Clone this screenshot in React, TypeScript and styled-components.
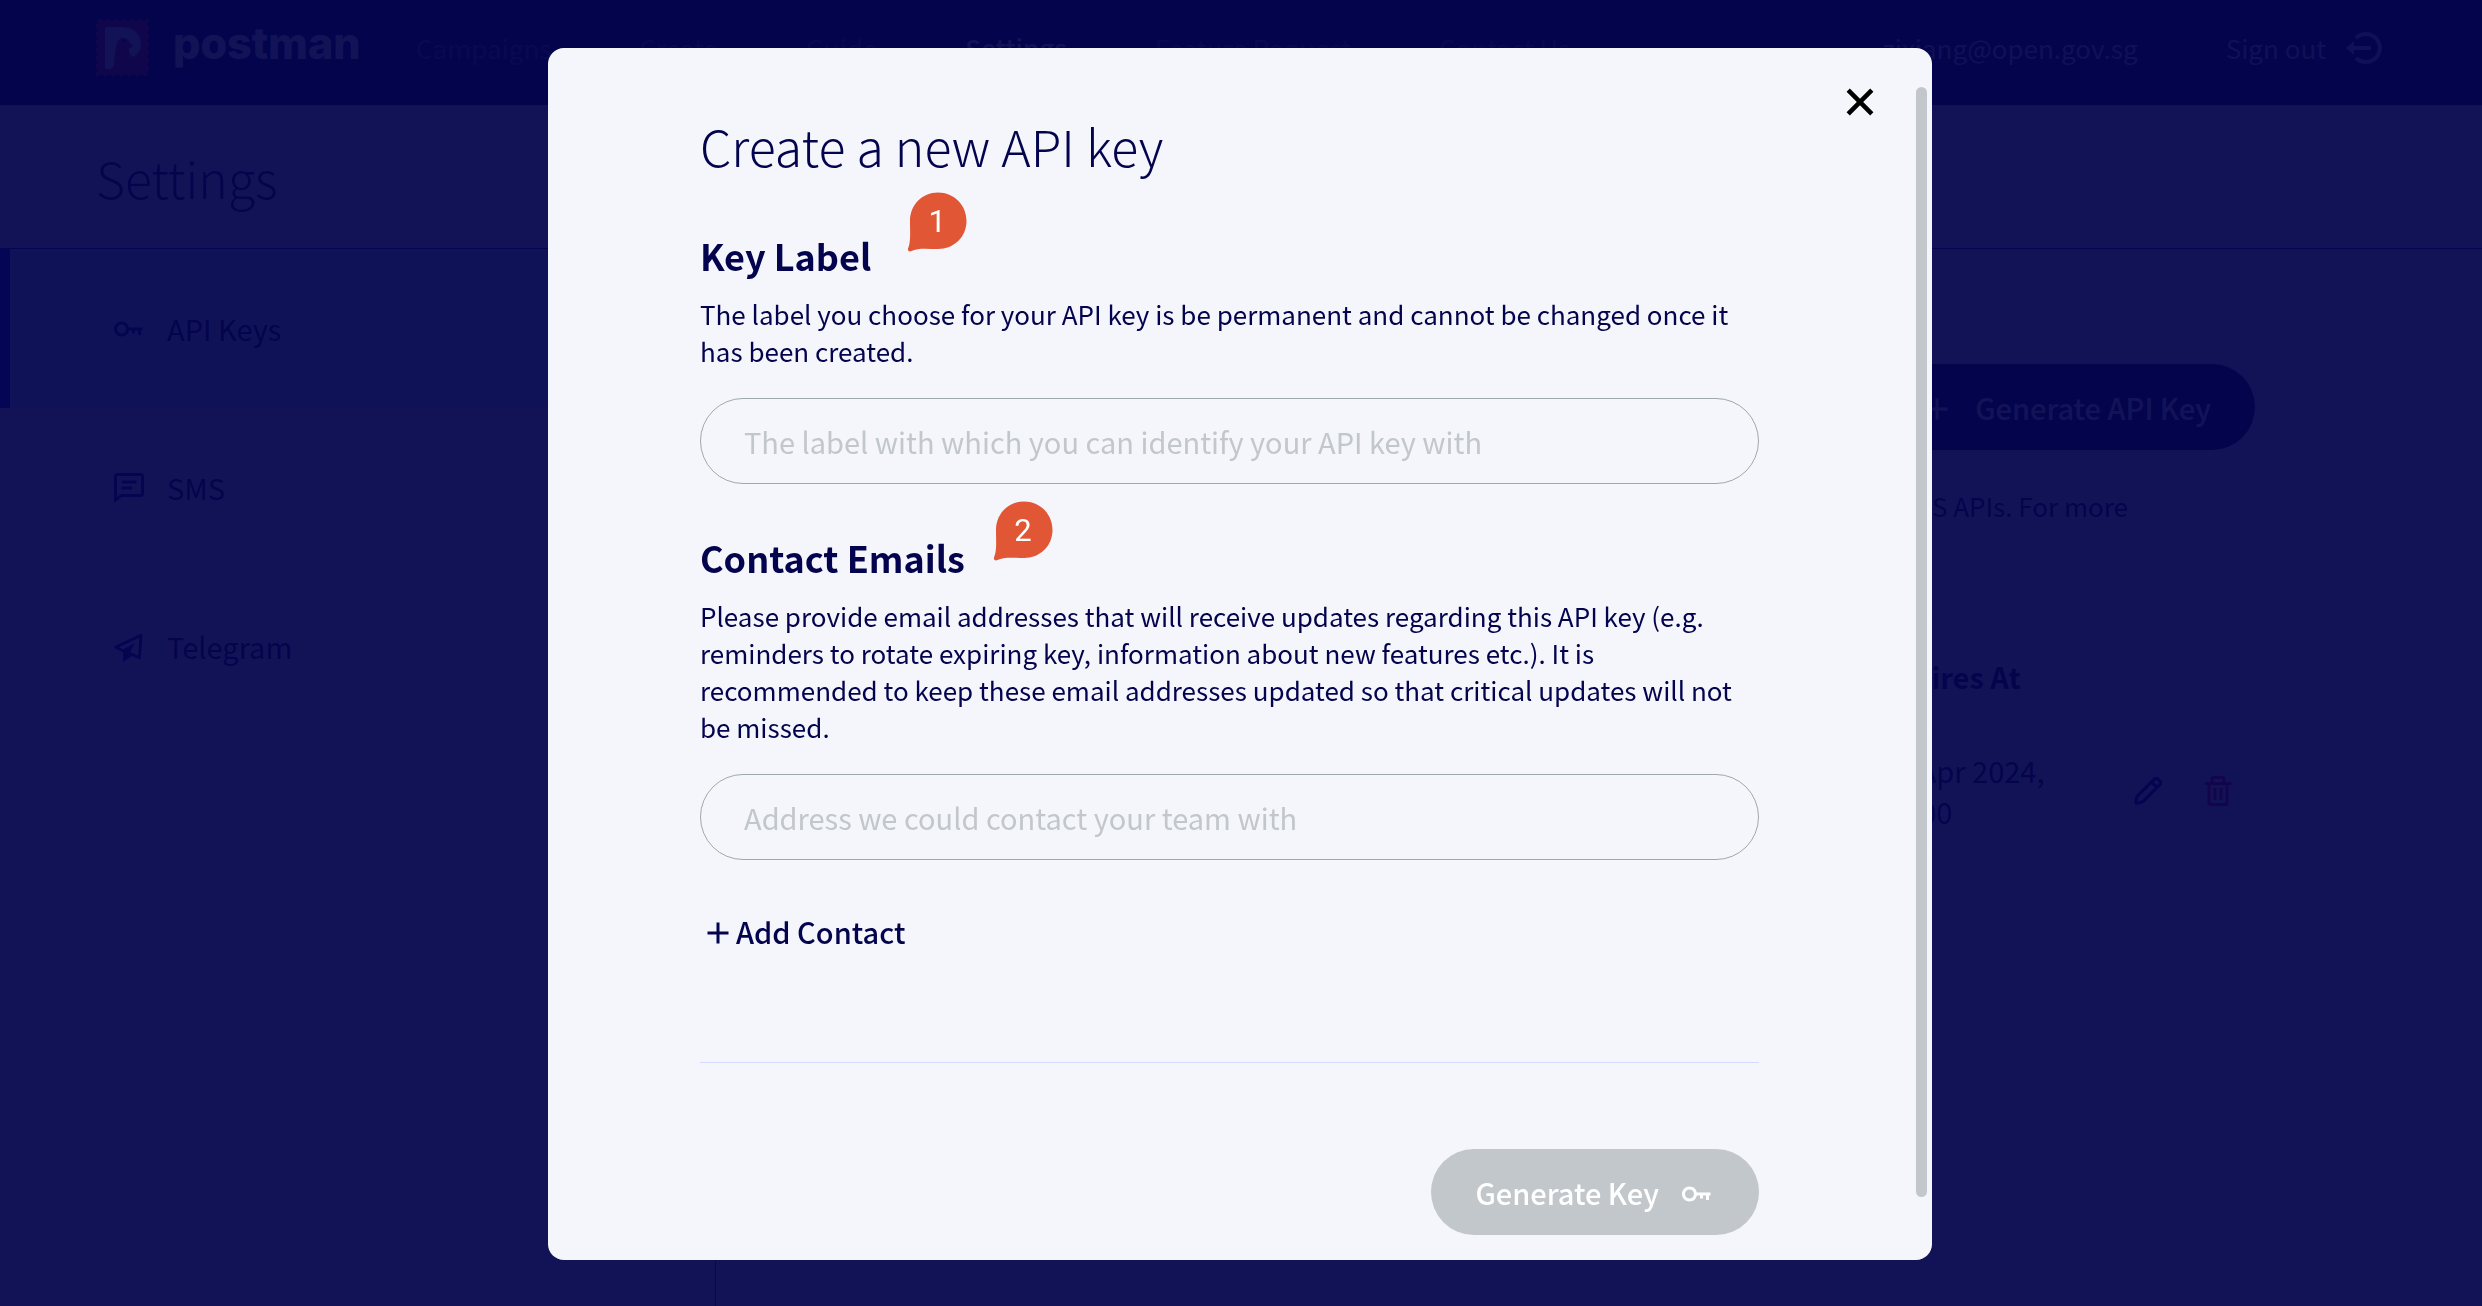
import React from 'react';
import styled, { createGlobalStyle } from 'styled-components';
import { BiCommentDetail, BiPaperPlane, BiPlus, BiTrash } from 'react-icons/bi';

const navy = '#03044d';
const paper = '#f5f6fc';
const grey = '#c2c7cb';

const Global = createGlobalStyle`
  *, *::before, *::after { box-sizing: border-box; }
  body {
    margin: 0;
    background: ${paper};
    color: ${navy};
    font-family: "Noto Sans CJK SC", sans-serif;
    font-size: 29px;
    line-height: 41px;
  }
  h1, h2, p { margin: 0; }
  button, input { font: inherit; }
  svg { display: block; flex: none; }
`;

/* ---------- page behind the dialog ---------- */

const Page = styled.div`
  display: flex;
  flex-direction: column;
  height: 100vh;
  overflow: hidden;
`;

const Header = styled.header`
  display: flex;
  align-items: center;
  flex: none;
  height: 105px;
  padding: 0 96px 10px;
  background: ${navy};
  color: ${paper};
  font-size: 26px;
`;

const Brand = styled.a`
  display: flex;
  align-items: center;
  gap: 24px;
  width: 320px;
  color: inherit;
  text-decoration: none;
`;

const Wordmark = styled.span`
  padding-bottom: 8px;
  font-family: Inter, sans-serif;
  font-size: 43px;
  font-weight: 800;
`;

const Nav = styled.nav`
  display: flex;
  flex: 1;
  gap: 88px;
  white-space: nowrap;
`;

const NavLink = styled.a<{ $active?: boolean }>`
  color: inherit;
  text-decoration: none;
  opacity: ${p => (p.$active ? 1 : 0.35)};
  font-weight: ${p => (p.$active ? 500 : 400)};
`;

const Account = styled.div`
  display: flex;
  align-items: center;
  gap: 88px;
  opacity: 0.8;
`;

const SignOut = styled.button`
  display: flex;
  align-items: center;
  gap: 20px;
  padding: 0;
  border: 0;
  background: none;
  color: inherit;
`;

const TitleBar = styled.div`
  display: flex;
  align-items: center;
  flex: none;
  height: 144px;
  padding: 0 96px;
  border-bottom: 1px solid #0c0ca0;
`;

const Title = styled.h1`
  font-size: 50px;
  font-weight: 300;
  line-height: 60px;
`;

const Columns = styled.div`
  display: flex;
  flex: 1;
`;

const Sidebar = styled.nav`
  width: 716px;
  border-right: 1px solid #4a4ac8;
`;

const SideLink = styled.a<{ $active?: boolean }>`
  display: flex;
  align-items: center;
  gap: 20px;
  height: 159px;
  padding-left: 101px;
  border-left: 10px solid ${p => (p.$active ? '#1515c8' : 'transparent')};
  background: ${p => (p.$active ? '#d9e2fb' : 'transparent')};
  color: inherit;
  text-decoration: none;
  svg { color: #14148c; }
`;

const Main = styled.main`
  flex: 1;
  padding: 115px 227px 0 96px;
`;

const MainHead = styled.div`
  display: flex;
  align-items: center;
  justify-content: flex-end;
`;

const Pill = styled.button<{ $bg: string }>`
  display: flex;
  align-items: center;
  gap: 20px;
  height: 86px;
  padding: 0 44px;
  border: 0;
  border-radius: 43px;
  background: ${p => p.$bg};
  color: #fff;
  font-weight: 500;
  svg { margin-top: 4px; }
`;

const Intro = styled.p`
  width: fit-content;
  margin: 37px 127px 57px auto;
  font-size: 26px;
  line-height: 37px;
`;

const Table = styled.table`
  width: 100%;
  border-collapse: collapse;
  table-layout: fixed;
  text-align: left;
  th, td { height: 115px; padding: 0; border-top: 1px solid #d4ddfb; }
  tbody tr { border-bottom: 1px solid #d4ddfb; }
  th:nth-child(2) { width: 250px; }
  th:nth-child(3) { width: 125px; }
`;

const Actions = styled.div`
  display: flex;
  gap: 34px;
`;

const IconButton = styled.button<{ $color: string }>`
  display: block;
  padding: 0;
  border: 0;
  background: none;
  color: ${p => p.$color};
`;

/* ---------- dialog ---------- */

const Overlay = styled.div`
  position: fixed;
  inset: 0;
  display: flex;
  justify-content: center;
  padding: 48px 2px 46px 0;
  background: rgba(3, 4, 77, 0.94);
`;

const Dialog = styled.section`
  position: relative;
  display: flex;
  width: 100%;
  max-width: 1384px;
  border-radius: 16px;
  background: ${paper};
  overflow: hidden;
`;

const Form = styled.form`
  flex: 1;
  display: flex;
  flex-direction: column;
  padding: 67px 157px 0 152px;
`;

const ScrollTrack = styled.div`
  display: flex;
  width: 16px;
  padding: 39px 5px 63px 0;
`;

const ScrollThumb = styled.div`
  flex: 1;
  border-radius: 6px;
  background: ${grey};
`;

const Close = styled.button`
  position: absolute;
  top: 36px;
  right: 54px;
  padding: 0;
  border: 0;
  background: none;
  color: #000;
`;

const Field = styled.div<{ $gap: number }>`
  margin-top: ${p => p.$gap}px;
`;

const Label = styled.label`
  position: relative;
  display: block;
  width: fit-content;
  font-size: 36px;
  font-weight: 700;
  line-height: 48px;
`;

const Help = styled.p`
  margin: 16px 0 29px;
  font-size: 26px;
  line-height: 37px;
`;

const Input = styled.input`
  display: block;
  width: 100%;
  height: 86px;
  padding: 0 43px;
  border: 1px solid #9fa8ad;
  border-radius: 43px;
  background: transparent;
  color: ${navy};
  &::placeholder { color: ${grey}; opacity: 1; }
`;

const AddContact = styled.button`
  display: flex;
  align-items: center;
  align-self: flex-start;
  height: 86px;
  margin-top: 28px;
  padding: 0;
  border: 0;
  background: none;
  color: ${navy};
  font-weight: 500;
  svg { margin-top: 4px; }
`;

const Footer = styled.footer`
  display: flex;
  justify-content: flex-end;
  margin-top: 88px;
  padding-top: 86px;
  border-top: 1px solid #d4ddfb;
`;

const Marker = styled.span<{ $right: number; $up: number }>`
  position: absolute;
  left: calc(100% + ${p => p.$right}px);
  bottom: ${p => p.$up}px;
  display: grid;
  width: 60px;
  height: 60px;
  > * { grid-area: 1 / 1; }
`;

const MarkerDigit = styled.span`
  place-self: center;
  color: #fff;
  font-family: Roboto, sans-serif;
  font-size: 31px;
  font-weight: 400;
`;

/* ---------- drawings ---------- */

const KeyIcon = () => (
  <svg width="36" height="36" viewBox="0 0 24 24" fill="currentColor" aria-hidden="true">
    <path d="M7 17a5.007 5.007 0 0 0 4.898-4H14v2h2v-2h2v3h2v-3h1v-2h-9.102A5.007 5.007 0 0 0 7 7c-2.757 0-5 2.243-5 5s2.243 5 5 5zm0-8c1.654 0 3 1.346 3 3s-1.346 3-3 3-3-1.346-3-3 1.346-3 3-3z" />
  </svg>
);

const PencilIcon = () => (
  <svg width="36" height="36" viewBox="0 0 24 24" fill="none" stroke="currentColor" strokeWidth="2.2" strokeLinejoin="round" aria-hidden="true">
    <path d="M4 20c0-2 .3-4 1.500-5.200L16.400 4a1.400 1.400 0 0 1 2 0L20 5.600a1.400 1.400 0 0 1 0 2L9.200 18.500C8 19.700 6 20 4 20z" />
    <path d="M14.400 6l3.600 3.600" />
  </svg>
);

const SignOutIcon = () => (
  <svg width="40" height="36" viewBox="3 0 40 36" fill="none" stroke="currentColor" strokeWidth="4" aria-hidden="true">
    <path d="M13 8a14 14 0 1 1 0 20" />
    <path d="M10 18h18" />
    <path d="M3 18l8-7v14z" fill="currentColor" stroke="none" />
  </svg>
);

const CloseIcon = () => (
  <svg width="36" height="36" viewBox="0 0 36 36" fill="none" stroke="currentColor" strokeWidth="4.6" aria-hidden="true">
    <path d="M6.200 6.200l23.600 23.600M29.800 6.200l-23.600 23.600" />
  </svg>
);

const Stamp = () => (
  <svg width="53" height="57" viewBox="0 0 53 57" aria-hidden="true">
    <rect x="1.500" y="1.500" width="50" height="54" fill="#d8293b" stroke="#d8293b" strokeWidth="3" strokeDasharray="4.500 3.500" />
    <path d="M9 10q0-2 2-2h14C37 8 45 15 45 25c0 6-3 10-8 13-3-2-4-4-4-8l4-3-5-6c-2-3-8-3-10 1-3 6-3 15-4 22 0 4-2 6-5 6h-4z" fill={paper} />
    <circle cx="28" cy="22" r="1.500" fill={navy} />
  </svg>
);

const Balloon = () => (
  <svg width="60" height="60" viewBox="0 0 60 60" aria-hidden="true">
    <path d="M31 0.500C47 0.500 59.500 13 59.500 29S47 57 31 57C22 57 11 55.500 4.500 59 2.500 60 .5 59 1 56.500 4 50 3 40 3 29 3 13 15 .5 31 .5z" fill="#e15634" />
  </svg>
);

export default function App() {
  return (
    <>
      <Global />
      <Page>
        <Header>
          <Brand href="#"><Stamp /><Wordmark>postman</Wordmark></Brand>
          <Nav>
            <NavLink href="#">Campaigns</NavLink>
            <NavLink href="#">Create</NavLink>
            <NavLink href="#">Guide</NavLink>
            <NavLink href="#" $active>Settings</NavLink>
            <NavLink href="#">Feature Request</NavLink>
            <NavLink href="#">Contact Us</NavLink>
          </Nav>
          <Account>
            <span>zixiang@open.gov.sg</span>
            <SignOut type="button">Sign out<SignOutIcon /></SignOut>
          </Account>
        </Header>
        <TitleBar><Title>Settings</Title></TitleBar>
        <Columns>
          <Sidebar>
            <SideLink href="#" $active><KeyIcon />API Keys</SideLink>
            <SideLink href="#"><BiCommentDetail size={36} />SMS</SideLink>
            <SideLink href="#"><BiPaperPlane size={36} />Telegram</SideLink>
          </Sidebar>
          <Main>
            <MainHead>
              <Pill type="button" $bg={navy}><BiPlus size={36} />Generate API Key</Pill>
            </MainHead>
            <Intro>SMS APIs. For more<br />&nbsp;</Intro>
            <Table>
              <thead>
                <tr><th aria-label="Label" /><th>Expires At</th><th aria-label="Actions" /></tr>
              </thead>
              <tbody>
                <tr>
                  <td />
                  <td>15 Apr 2024,<br />00:00</td>
                  <td>
                    <Actions>
                      <IconButton type="button" aria-label="Edit" $color="#14148c"><PencilIcon /></IconButton>
                      <IconButton type="button" aria-label="Delete" $color="#ff1030"><BiTrash size={36} /></IconButton>
                    </Actions>
                  </td>
                </tr>
              </tbody>
            </Table>
          </Main>
        </Columns>
      </Page>

      <Overlay>
        <Dialog role="dialog" aria-modal="true" aria-labelledby="dialog-title">
          <Form onSubmit={e => e.preventDefault()}>
            <Title as="h2" id="dialog-title">Create a new API key</Title>
            <Field $gap={56}>
              <Label htmlFor="key-label">
                Key Label
                <Marker $right={36} $up={27}><Balloon /><MarkerDigit>1</MarkerDigit></Marker>
              </Label>
              <Help>The label you choose for your API key is be permanent and cannot be changed once it has been created.</Help>
              <Input id="key-label" placeholder="The label with which you can identify your API key with" />
            </Field>
            <Field $gap={49}>
              <Label htmlFor="contact-email">
                Contact Emails
                <Marker $right={28} $up={20}><Balloon /><MarkerDigit>2</MarkerDigit></Marker>
              </Label>
              <Help>
                Please provide email addresses that will receive updates regarding this API key (e.g. reminders to rotate
                expiring key, information about new features etc.). It is recommended to keep these email addresses
                updated so that critical updates will not be missed.
              </Help>
              <Input id="contact-email" type="email" placeholder="Address we could contact your team with" />
            </Field>
            <AddContact type="button"><BiPlus size={36} />Add Contact</AddContact>
            <Footer>
              <Pill type="submit" disabled $bg={grey}>Generate Key<KeyIcon /></Pill>
            </Footer>
          </Form>
          <ScrollTrack><ScrollThumb /></ScrollTrack>
          <Close type="button" aria-label="Close"><CloseIcon /></Close>
        </Dialog>
      </Overlay>
    </>
  );
}
